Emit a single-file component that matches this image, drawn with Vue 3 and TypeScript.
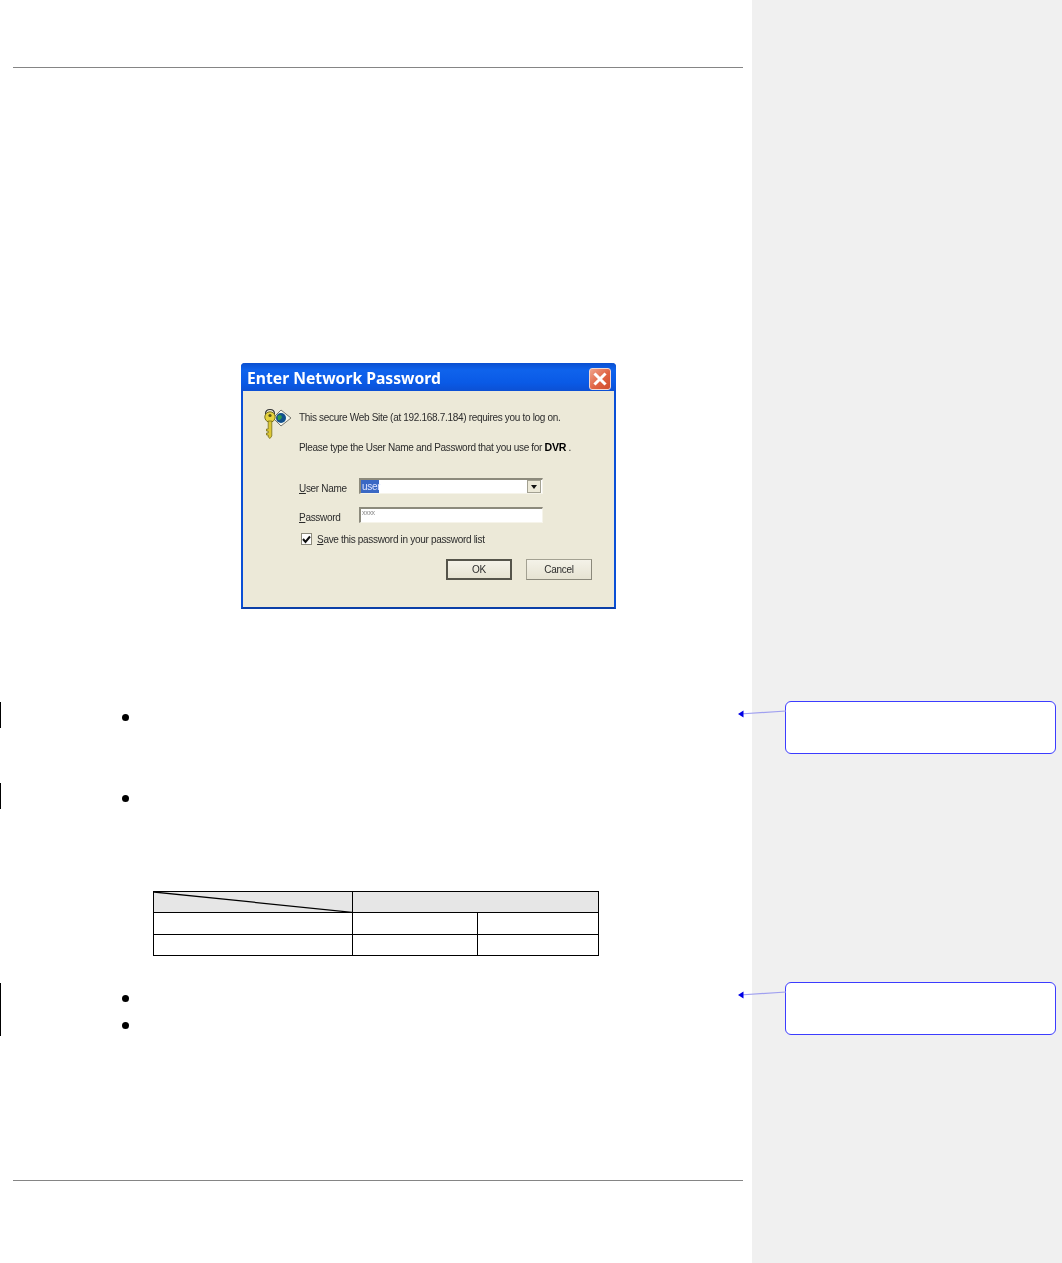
<script setup lang="ts">
const changes = [
  { id: 'a', bullets: 1 },
  { id: 'b', bullets: 1 },
]
const tableRows = ['row-1', 'row-2']
</script>

<template>
  <div class="page">
    <main class="doc">
      <div class="rule"></div>

      <div class="dialog">
        <div class="titlebar">
          <span class="title">Enter Network Password</span>
          <span class="close">
            <svg width="14" height="14" viewBox="0 0 14 14">
              <path d="M2.5 2.5 L11.5 11.5 M11.5 2.5 L2.5 11.5" stroke="#fff" stroke-width="3" stroke-linecap="square" />
            </svg>
          </span>
        </div>
        <div class="dialog-body">
          <svg class="key" width="30" height="32" viewBox="0 0 30 32">
            <path d="M11 10 L19 2 L29 10 L19 18 Z" fill="#f4f6ee" stroke="#77776e" stroke-width="1" />
            <circle cx="19" cy="10" r="5" fill="#12508c" />
            <path d="M15.5 8 Q19 5.5 20 9 Q19 12.5 16 12 Z" fill="#2f9a4c" />
            <path d="M3.5 6 Q3.5 1.5 8 1.5 Q12.5 1.5 12.5 6" fill="none" stroke="#333" stroke-width="1.2" />
            <circle cx="8" cy="9" r="5.2" fill="#e6d23e" stroke="#77701c" stroke-width="1" />
            <circle cx="8" cy="7.5" r="1.6" fill="#5a5518" />
            <path d="M6.2 13 H9.8 V28 L8 30.5 L6.2 29 V27 H4.5 V25 H6.2 V23 H4.5 V21 H6.2 Z" fill="#dcc734" stroke="#77701c" stroke-width="0.8" />
          </svg>
          <div class="content">
            <p class="line first">This secure Web Site (at 192.168.7.184) requires you to log on.</p>
            <p class="line second">Please type the User Name and Password that you use for <b>DVR</b> .</p>
            <div class="form">
              <label class="field-label"><u>U</u>ser Name</label>
              <div class="input combo">
                <span class="selected">user</span>
                <span class="arrow-btn"><i></i></span>
              </div>
              <label class="field-label"><u>P</u>assword</label>
              <div class="input password"><span class="stars">xxxx</span></div>
            </div>
            <div class="save">
              <span class="checkbox">
                <svg width="9" height="9" viewBox="0 0 9 9">
                  <path d="M1 4 L3.5 7 L8 1.5" fill="none" stroke="#111" stroke-width="2" />
                </svg>
              </span>
              <span><u>S</u>ave this password in your password list</span>
            </div>
            <div class="buttons">
              <span class="btn default">OK</span>
              <span class="btn">Cancel</span>
            </div>
          </div>
        </div>
      </div>

      <div v-for="c in changes" :key="c.id" class="change" :class="'change-' + c.id">
        <span class="bullet"></span>
      </div>

      <table class="grid">
        <colgroup>
          <col class="col-a" />
          <col class="col-b" />
          <col class="col-c" />
        </colgroup>
        <tbody>
          <tr class="head">
            <td class="diag">
              <svg class="diag-line" viewBox="0 0 199 21" preserveAspectRatio="none">
                <line x1="0" y1="0" x2="199" y2="21" stroke="#000" stroke-width="1.3" />
              </svg>
            </td>
            <td colspan="2"></td>
          </tr>
          <tr v-for="r in tableRows" :key="r">
            <td></td>
            <td></td>
            <td></td>
          </tr>
        </tbody>
      </table>

      <div class="change change-c">
        <span class="bullet"></span>
        <span class="bullet"></span>
      </div>

      <div class="rule bottom"></div>
    </main>

    <aside class="side">
      <div class="comment">
        <svg class="connector" width="50" height="10" viewBox="0 0 50 10">
          <line x1="2" y1="5" x2="48" y2="2" stroke="#a0a0f0" stroke-width="1.2" />
          <path d="M0 5 L5.5 1.5 V8.5 Z" fill="#0000e6" />
        </svg>
      </div>
      <div class="comment second-comment">
        <svg class="connector" width="50" height="10" viewBox="0 0 50 10">
          <line x1="2" y1="5" x2="48" y2="2" stroke="#a0a0f0" stroke-width="1.2" />
          <path d="M0 5 L5.5 1.5 V8.5 Z" fill="#0000e6" />
        </svg>
      </div>
    </aside>
  </div>
</template>

<style scoped>
.page {
  display: flex;
  width: 1062px;
  height: 1263px;
  overflow: hidden;
  background: #fff;
  font-family: "Liberation Sans", Arial, sans-serif;
}

.doc {
  width: 752px;
  padding-top: 67px;
  box-sizing: border-box;
}

.side {
  width: 310px;
  background: #f0f0f0;
  padding: 701px 6px 0 33px;
  box-sizing: border-box;
}

.rule {
  height: 1px;
  margin: 0 9px 0 13px;
  background: #858585;
}

.rule.bottom {
  margin-top: 144px;
}

/* the scanned-in dialog */
.dialog {
  width: 375px;
  height: 246px;
  margin: 295px 0 0 241px;
  box-sizing: border-box;
  display: flex;
  flex-direction: column;
  border: 2px solid #0a4fd6;
  border-top: 0;
  border-bottom-color: #0b3fa8;
  border-radius: 4px 4px 0 0;
  filter: blur(0.5px);
  background: #ece9d8;
  color: #2c2c2c;
  font-family: "Liberation Sans", Arial, sans-serif;
  font-size: 10px;
  letter-spacing: -0.31px;
}

.titlebar {
  height: 28px;
  flex: none;
  margin: 0 -2px;
  padding: 0 5px 0 6px;
  display: flex;
  align-items: center;
  justify-content: space-between;
  background: linear-gradient(#0a4fd0 0%, #0f63ec 25%, #0a5ae6 70%, #0c50d4 100%);
  border-radius: 4px 4px 0 0;
}

.title {
  color: #fff;
  font-family: "Noto Sans", sans-serif;
  font-weight: 700;
  font-size: 15.7px;
  letter-spacing: 0;
  padding-top: 2px;
}

.close {
  width: 22px;
  height: 22px;
  margin-top: 3px;
  box-sizing: border-box;
  display: flex;
  align-items: center;
  justify-content: center;
  border: 1px solid #f4d8d0;
  border-radius: 3px;
  background: linear-gradient(135deg, #f0a48c, #e06444 55%, #d04c2c);
}

.dialog-body {
  flex: 1;
  display: flex;
  padding: 17px 0 0 19px;
}

.key {
  flex: none;
  margin-right: 7px;
}

.content {
  flex: 1;
}

.line {
  margin: 0;
  height: 14px;
  line-height: 14px;
  white-space: nowrap;
}

.line.first {
  margin-top: 3px;
}

.line.second {
  margin-top: 15px;
}

.line b {
  color: #000;
  font-size: 10.6px;
}

.form {
  display: grid;
  grid-template-columns: 60px auto;
  grid-auto-rows: 16px;
  row-gap: 13px;
  margin-top: 24px;
  align-items: center;
}

.field-label {
  white-space: nowrap;
  padding-top: 4px;
}

.input {
  width: 184px;
  height: 16px;
  box-sizing: border-box;
  background: #fff;
  border: 1px solid #f6f4ea;
  border-top: 2px solid #8c8a7c;
  border-left: 2px solid #8c8a7c;
  display: flex;
  align-items: center;
  justify-content: space-between;
}

.combo {
  padding-right: 1px;
}

.selected {
  background: #3a68c4;
  color: #dfe6ff;
  padding: 0 1px;
  line-height: 13px;
  width: 18px;
  box-sizing: border-box;
}

.arrow-btn {
  width: 14px;
  height: 13px;
  display: flex;
  align-items: center;
  justify-content: center;
  background: #ece9d8;
  border: 1px solid #a3a192;
  box-sizing: border-box;
}

.arrow-btn i {
  width: 0;
  height: 0;
  border-left: 3.5px solid transparent;
  border-right: 3.5px solid transparent;
  border-top: 4px solid #111;
}

.stars {
  font-size: 7px;
  color: #888;
  line-height: 8px;
  align-self: flex-start;
  padding-left: 1px;
}

.save {
  display: flex;
  align-items: center;
  gap: 5px;
  margin: 10px 0 0 2px;
  white-space: nowrap;
}

.checkbox {
  width: 11px;
  height: 12px;
  box-sizing: border-box;
  display: flex;
  align-items: center;
  justify-content: center;
  background: #fff;
  border: 1px solid #8c8a7c;
}

.buttons {
  display: flex;
  gap: 14px;
  margin: 14px 0 0 147px;
}

.btn {
  width: 66px;
  height: 21px;
  box-sizing: border-box;
  display: flex;
  align-items: center;
  justify-content: center;
  border: 1px solid #a3a192;
  border-right-color: #8b897b;
  border-bottom-color: #8b897b;
  background: linear-gradient(#f4f2e8, #e6e3d2);
}

.btn.default {
  border: 2px solid #55544a;
}

/* tracked-change blocks: a bar on the far left with list bullets */
.change {
  border-left: 1px solid #000;
  display: flex;
  flex-direction: column;
  box-sizing: border-box;
  margin-left: 0;
}

.change-a {
  height: 26px;
  margin-top: 93px;
  padding-top: 12px;
}

.change-b {
  height: 26px;
  margin-top: 55px;
  padding-top: 12px;
}

.change-c {
  height: 53px;
  margin-top: 27px;
  padding-top: 12px;
  gap: 20px;
}

.bullet {
  width: 7px;
  height: 7px;
  margin-left: 121px;
  border-radius: 50%;
  background: #000;
  flex: none;
}

.grid {
  width: 446px;
  height: 65px;
  margin: 82px 0 0 153px;
  border-collapse: collapse;
  table-layout: fixed;
}

.col-a {
  width: 199px;
}

.col-b {
  width: 125px;
}

.grid td {
  padding: 0;
  border: 1px solid #000;
  height: 21px;
  box-sizing: border-box;
}

.head td {
  background: #e6e6e6;
}

.diag {
  position: relative;
}

.diag-line {
  position: absolute;
  inset: 0;
  width: 100%;
  height: 100%;
}

.comment {
  position: relative;
  height: 53px;
  width: 271px;
  box-sizing: border-box;
  background: #fff;
  border: 1px solid #3c3cff;
  border-radius: 6px;
}

.second-comment {
  margin-top: 228px;
}

.connector {
  position: absolute;
  left: -48px;
  top: 7px;
}
</style>

<style>
html,
body {
  margin: 0;
  background: #fff;
}
</style>
